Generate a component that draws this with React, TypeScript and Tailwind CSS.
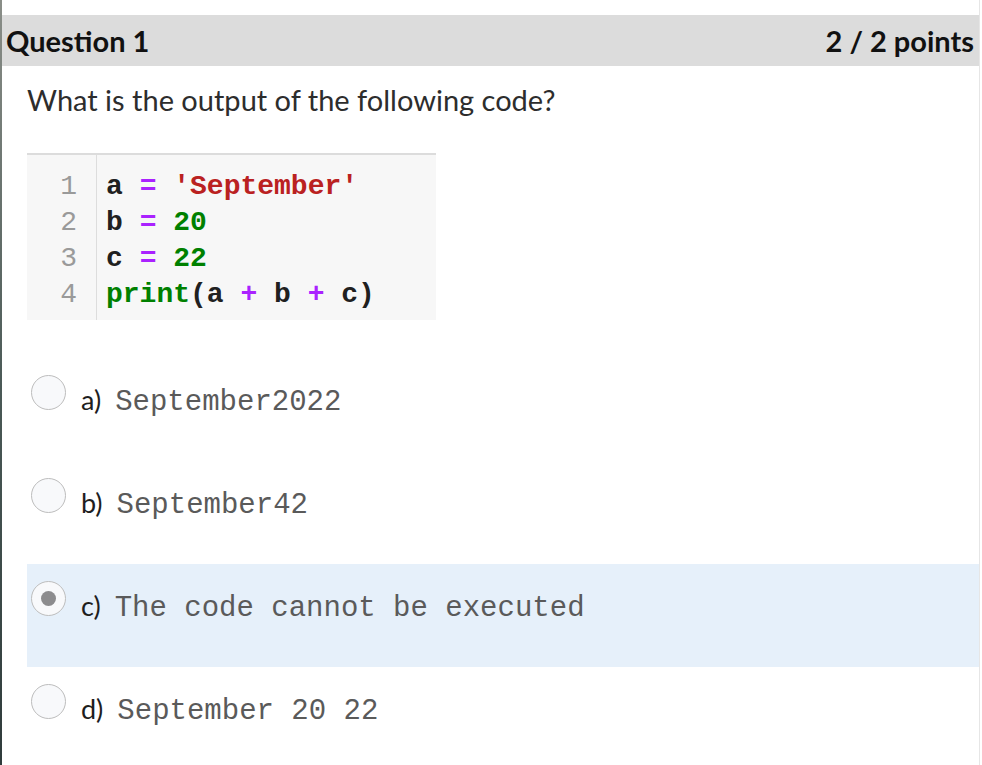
const lines = [
  [
    { t: "a", c: "text-[#202020]" },
    { t: " " },
    { t: "=", c: "text-[#aa22ff]" },
    { t: " " },
    { t: "'September'", c: "text-[#ba2121]" },
  ],
  [
    { t: "b", c: "text-[#202020]" },
    { t: " " },
    { t: "=", c: "text-[#aa22ff]" },
    { t: " " },
    { t: "20", c: "text-[#008000]" },
  ],
  [
    { t: "c", c: "text-[#202020]" },
    { t: " " },
    { t: "=", c: "text-[#aa22ff]" },
    { t: " " },
    { t: "22", c: "text-[#008000]" },
  ],
  [
    { t: "print", c: "text-[#008000]" },
    { t: "(a ", c: "text-[#202020]" },
    { t: "+", c: "text-[#aa22ff]" },
    { t: " b ", c: "text-[#202020]" },
    { t: "+", c: "text-[#aa22ff]" },
    { t: " c)", c: "text-[#202020]" },
  ],
];

const options = [
  { key: "a)", text: "September2022", selected: false },
  { key: "b)", text: "September42", selected: false },
  { key: "c)", text: "The code cannot be executed", selected: true },
  { key: "d)", text: "September 20 22", selected: false },
];

function Radio({ checked }: { checked: boolean }) {
  return (
    <div className="w-[35px] h-[35px] rounded-full border border-[#bdbdbd] bg-[#f8f9fb] flex items-center justify-center shrink-0">
      {checked && <div className="w-[15px] h-[15px] rounded-full bg-[#8c8c8e]" />}
    </div>
  );
}

export default function App() {
  return (
    <div className="min-h-[765px] w-[982px] bg-white flex font-['Lato','Noto_Sans',sans-serif]">
      {/* window edge */}
      <div className="w-[2px] bg-gradient-to-b from-[#8a8e88] via-[#4b5a57] to-[#2f3b3b] shrink-0" />

      <div className="w-[978px] border-r border-[#e6e6e6] pt-[15px]">
        {/* Header */}
        <div className="h-[51px] bg-[#dcdcdc] flex items-center justify-between pl-[4px] pr-[5px] text-[29px] font-bold text-[#111]">
          <span>Question 1</span>
          <span>2 / 2 points</span>
        </div>

        <div className="pl-[25px]">
          <p className="mt-[16px] text-[29px] leading-[36px] text-[#2d2d2d]">
            What is the output of the following code?
          </p>

          {/* Code cell */}
          <div className="mt-[35px] w-[409px] h-[167px] bg-[#f7f7f7] border-t-2 border-[#dcdcdc] flex font-['Liberation_Mono',monospace] text-[28px] leading-[36px]">
            <div className="w-[70px] pr-[19px] pt-[14px] text-right text-[#9a9a9a] border-r border-[#dddddd]">
              {lines.map((_, i) => (
                <div key={i}>{i + 1}</div>
              ))}
            </div>
            <div className="pl-[9px] pt-[14px] font-bold whitespace-pre">
              {lines.map((ln, i) => (
                <div key={i}>
                  {ln.map((s, j) => (
                    <span key={j} className={s.c}>
                      {s.t}
                    </span>
                  ))}
                </div>
              ))}
            </div>
          </div>

          {/* Options */}
          <div className="mt-[38px]">
            {options.map((o) => (
              <div
                key={o.key}
                className={`h-[103px] flex items-start pl-[4px] ${o.selected ? "bg-[#e6f0fa]" : ""}`}
              >
                <div className="pt-[17px]">
                  <Radio checked={o.selected} />
                </div>
                <div className="pt-[24px] pl-[15px] flex items-baseline gap-[14px] leading-[36px]">
                  <span className="text-[27px] text-[#1e1e1e]">{o.key}</span>
                  <span className="font-['Liberation_Mono',monospace] text-[29px] text-[#5a5a5a]">
                    {o.text}
                  </span>
                </div>
              </div>
            ))}
          </div>
        </div>
      </div>
    </div>
  );
}
